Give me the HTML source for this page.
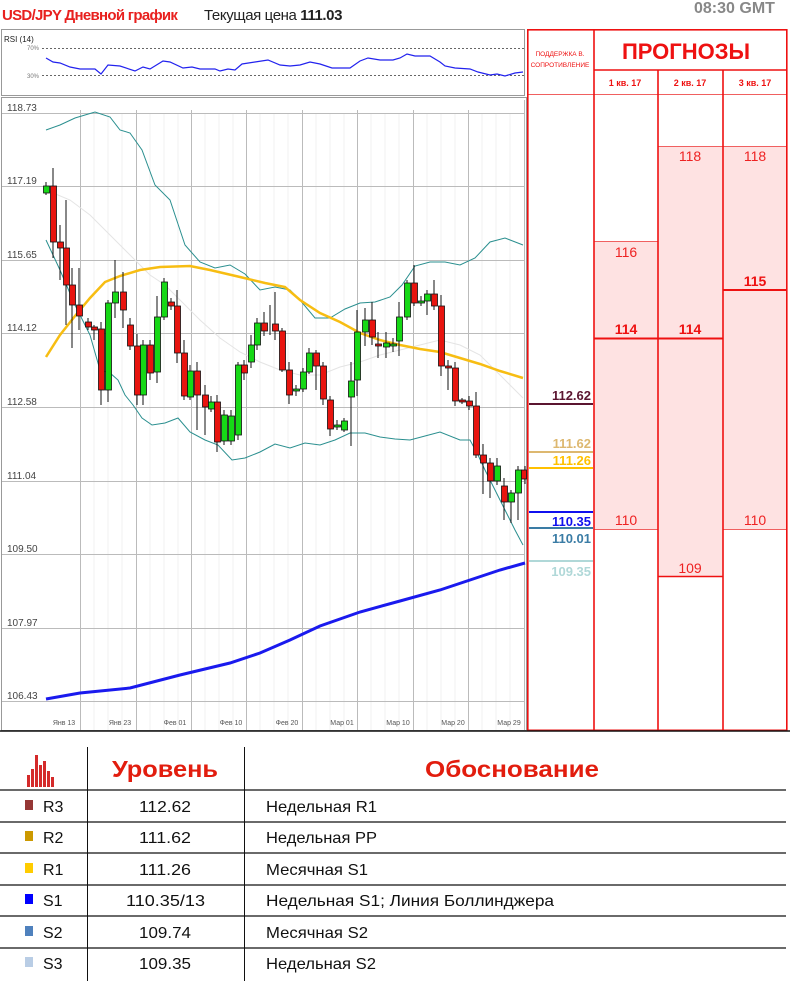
<!DOCTYPE html>
<html><head><meta charset="utf-8"><style>
body{margin:0;width:790px;height:989px;background:#fff;overflow:hidden;font-family:"Liberation Sans",sans-serif;position:relative}
.abs{position:absolute}
svg text{font-family:"Liberation Sans",sans-serif}
</style></head><body>
<div class="abs" style="left:2px;top:7px;font-size:15px;color:#e8201e;font-weight:bold;letter-spacing:-0.7px">USD/JPY Дневной график</div>
<div class="abs" style="left:204px;top:7px;font-size:15px;color:#222;letter-spacing:-0.4px">Текущая цена <b>111.03</b></div>
<div class="abs" style="left:694px;top:0px;font-size:16px;color:#888;font-weight:bold">08:30 GMT</div>

<svg class="abs" style="left:0;top:0" width="790" height="745" viewBox="0 0 790 745">
<rect x="1.5" y="29.5" width="523" height="66" fill="#fff" stroke="#999"/>
<text x="4" y="42" font-size="8" fill="#222">RSI (14)</text>
<text x="27" y="50" font-size="6" fill="#777">70%</text>
<text x="27" y="78" font-size="6" fill="#777">30%</text>
<line x1="42" y1="48.5" x2="524" y2="48.5" stroke="#666" stroke-dasharray="2,2"/>
<line x1="42" y1="75.5" x2="524" y2="75.5" stroke="#666" stroke-dasharray="2,2"/>
<polyline fill="none" stroke="#2222ee" stroke-width="1.2" points="46,58 53,62 60,63 70,67 80,69 95,69 101,74 108,65 120,66 135,71 143,67 150,69 163,61 170,62 183,68 192,67 200,69 215,69 220,71 228,69 235,70 242,64 255,62 268,60 280,65 290,66 300,65 310,62 320,64 332,68 340,68 350,68 360,61 368,58 380,60 393,60 400,58 407,54 415,56 430,56 440,62 445,66 455,68 470,69 478,72 490,75 497,74 505,76 515,73 523,72"/>

<rect x="1.5" y="97.5" width="525" height="633" fill="#fff" stroke="#999"/>
<g stroke="#f0f0f0" stroke-width="1">
<line x1="94" y1="113" x2="94" y2="730"/><line x1="108" y1="113" x2="108" y2="730"/><line x1="122" y1="113" x2="122" y2="730"/>
<line x1="150" y1="113" x2="150" y2="730"/><line x1="164" y1="113" x2="164" y2="730"/><line x1="178" y1="113" x2="178" y2="730"/>
<line x1="205" y1="113" x2="205" y2="730"/><line x1="219" y1="113" x2="219" y2="730"/><line x1="233" y1="113" x2="233" y2="730"/>
<line x1="260" y1="113" x2="260" y2="730"/><line x1="274" y1="113" x2="274" y2="730"/><line x1="288" y1="113" x2="288" y2="730"/>
<line x1="316" y1="113" x2="316" y2="730"/><line x1="330" y1="113" x2="330" y2="730"/><line x1="344" y1="113" x2="344" y2="730"/>
<line x1="371" y1="113" x2="371" y2="730"/><line x1="385" y1="113" x2="385" y2="730"/><line x1="399" y1="113" x2="399" y2="730"/>
<line x1="427" y1="113" x2="427" y2="730"/><line x1="441" y1="113" x2="441" y2="730"/><line x1="455" y1="113" x2="455" y2="730"/>
<line x1="482" y1="113" x2="482" y2="730"/><line x1="496" y1="113" x2="496" y2="730"/><line x1="510" y1="113" x2="510" y2="730"/>
</g>
<g stroke="#bbb" stroke-width="1">
<line x1="2" y1="113.5" x2="525" y2="113.5"/><line x1="2" y1="186.5" x2="525" y2="186.5"/><line x1="2" y1="260.5" x2="525" y2="260.5"/>
<line x1="2" y1="333.5" x2="525" y2="333.5"/><line x1="2" y1="407.5" x2="525" y2="407.5"/><line x1="2" y1="481.5" x2="525" y2="481.5"/>
<line x1="2" y1="554.5" x2="525" y2="554.5"/><line x1="2" y1="628.5" x2="525" y2="628.5"/><line x1="2" y1="701.5" x2="525" y2="701.5"/>
<line x1="80.5" y1="110" x2="80.5" y2="730"/><line x1="136.5" y1="110" x2="136.5" y2="730"/><line x1="191.5" y1="110" x2="191.5" y2="730"/>
<line x1="246.5" y1="110" x2="246.5" y2="730"/><line x1="302.5" y1="110" x2="302.5" y2="730"/><line x1="357.5" y1="110" x2="357.5" y2="730"/>
<line x1="413.5" y1="110" x2="413.5" y2="730"/><line x1="468.5" y1="110" x2="468.5" y2="730"/><line x1="524.5" y1="100" x2="524.5" y2="730"/>
</g>
<g font-size="10" fill="#444">
<text x="7" y="111">118.73</text><text x="7" y="184">117.19</text><text x="7" y="258">115.65</text><text x="7" y="331">114.12</text>
<text x="7" y="405">112.58</text><text x="7" y="479">111.04</text><text x="7" y="552">109.50</text><text x="7" y="626">107.97</text><text x="7" y="699">106.43</text>
</g>
<g font-size="7" fill="#555" text-anchor="middle">
<text x="64" y="725">Янв 13</text><text x="120" y="725">Янв 23</text><text x="175" y="725">Фев 01</text><text x="231" y="725">Фев 10</text><text x="287" y="725">Фев 20</text>
<text x="342" y="725">Мар 01</text><text x="398" y="725">Мар 10</text><text x="453" y="725">Мар 20</text><text x="509" y="725">Мар 29</text>
</g>

<polyline fill="none" stroke="#e4e4e4" stroke-width="1" points="46,190 70,200 90,215 110,235 130,255 150,275 165,285 180,300 200,320 220,338 240,352 260,362 280,370 300,375 320,375 340,367 360,362 380,355 400,350 420,345 440,340 460,345 480,355 500,375 523,398"/>
<polyline fill="none" stroke="#2a8f8f" stroke-width="1" points="46,130 60,125 75,118 95,112 110,117 120,130 130,133 142,150 155,185 170,200 185,245 200,262 215,268 230,265 245,274 260,290 275,287 290,290 300,300 315,318 330,318 345,309 360,303 375,302 390,297 402,285 415,266 430,262 445,262 460,265 475,258 490,242 505,238 523,245"/>
<polyline fill="none" stroke="#2a8f8f" stroke-width="1" points="46,240 60,270 75,305 90,335 100,370 110,373 118,380 125,395 133,405 142,418 152,425 165,423 178,418 190,432 205,440 218,445 232,460 245,458 260,452 275,444 290,448 305,443 320,445 335,440 350,433 365,433 380,437 395,439 410,440 425,436 440,432 460,440 470,440 478,455 485,470 495,490 505,510 515,530 523,545"/>
<polyline fill="none" stroke="#f7bd12" stroke-width="2.5" points="46,357 60,335 75,316 90,298 105,282 120,276 140,270 160,267 190,266 210,270 240,277 265,283 285,287 300,300 320,313 340,322 360,333 380,340 400,345 420,349 440,352 460,358 480,364 500,371 523,378"/>
<polyline fill="none" stroke="#1a1aee" stroke-width="3" points="46,699 80,693 130,688 180,675 230,663 260,653 290,640 320,626 360,612 400,601 440,590 470,580 500,570 525,563"/>

<g stroke="#111" stroke-width="1">
<line x1="46" y1="182" x2="46" y2="195"/><line x1="53" y1="168" x2="53" y2="258"/><line x1="60" y1="225" x2="60" y2="280"/><line x1="66" y1="200" x2="66" y2="325"/>
<line x1="72" y1="268" x2="72" y2="348"/><line x1="79" y1="268" x2="79" y2="330"/><line x1="88" y1="318" x2="88" y2="330"/><line x1="94" y1="325" x2="94" y2="340"/>
<line x1="101" y1="322" x2="101" y2="405"/><line x1="108" y1="300" x2="108" y2="402"/><line x1="115" y1="260" x2="115" y2="318"/><line x1="123" y1="272" x2="123" y2="328"/>
<line x1="130" y1="318" x2="130" y2="350"/><line x1="137" y1="334" x2="137" y2="405"/><line x1="143" y1="340" x2="143" y2="405"/><line x1="150" y1="340" x2="150" y2="380"/>
<line x1="157" y1="296" x2="157" y2="383"/><line x1="164" y1="278" x2="164" y2="320"/><line x1="171" y1="298" x2="171" y2="310"/><line x1="177" y1="290" x2="177" y2="363"/>
<line x1="184" y1="340" x2="184" y2="400"/><line x1="190" y1="365" x2="190" y2="400"/><line x1="197" y1="362" x2="197" y2="430"/><line x1="205" y1="385" x2="205" y2="435"/>
<line x1="211" y1="396" x2="211" y2="412"/><line x1="217" y1="395" x2="217" y2="452"/><line x1="224" y1="410" x2="224" y2="445"/><line x1="231" y1="410" x2="231" y2="445"/>
<line x1="238" y1="362" x2="238" y2="440"/><line x1="244" y1="360" x2="244" y2="380"/><line x1="251" y1="335" x2="251" y2="368"/><line x1="257" y1="318" x2="257" y2="350"/>
<line x1="264" y1="312" x2="264" y2="336"/><line x1="270" y1="305" x2="270" y2="335"/><line x1="275" y1="292" x2="275" y2="340"/><line x1="282" y1="328" x2="282" y2="372"/>
<line x1="289" y1="362" x2="289" y2="404"/><line x1="296" y1="385" x2="296" y2="396"/><line x1="303" y1="368" x2="303" y2="392"/><line x1="309" y1="348" x2="309" y2="374"/>
<line x1="316" y1="350" x2="316" y2="390"/><line x1="323" y1="362" x2="323" y2="405"/><line x1="330" y1="396" x2="330" y2="436"/><line x1="337" y1="420" x2="337" y2="430"/>
<line x1="344" y1="418" x2="344" y2="432"/><line x1="351" y1="362" x2="351" y2="446"/><line x1="357" y1="310" x2="357" y2="396"/><line x1="365" y1="308" x2="365" y2="346"/>
<line x1="372" y1="302" x2="372" y2="345"/><line x1="378" y1="332" x2="378" y2="358"/><line x1="386" y1="332" x2="386" y2="358"/><line x1="393" y1="338" x2="393" y2="352"/>
<line x1="399" y1="302" x2="399" y2="356"/><line x1="407" y1="280" x2="407" y2="320"/><line x1="414" y1="265" x2="414" y2="306"/><line x1="421" y1="296" x2="421" y2="306"/>
<line x1="427" y1="290" x2="427" y2="315"/><line x1="434" y1="280" x2="434" y2="310"/><line x1="441" y1="295" x2="441" y2="376"/><line x1="448" y1="360" x2="448" y2="390"/>
<line x1="455" y1="362" x2="455" y2="406"/><line x1="462" y1="398" x2="462" y2="404"/><line x1="469" y1="396" x2="469" y2="410"/><line x1="476" y1="392" x2="476" y2="458"/>
<line x1="483" y1="444" x2="483" y2="494"/><line x1="490" y1="458" x2="490" y2="498"/><line x1="497" y1="458" x2="497" y2="485"/><line x1="504" y1="478" x2="504" y2="520"/>
<line x1="511" y1="490" x2="511" y2="523"/><line x1="518" y1="466" x2="518" y2="520"/><line x1="525" y1="466" x2="525" y2="484"/>
</g>
<g stroke="#111" stroke-width="0.8">
<rect x="43.5" y="186" width="6" height="7" fill="#16d816"/>
<rect x="50.5" y="186" width="6" height="56" fill="#e8140f"/>
<rect x="57.5" y="242" width="6" height="6" fill="#e8140f"/>
<rect x="63.5" y="248" width="6" height="37" fill="#e8140f"/>
<rect x="69.5" y="285" width="6" height="20" fill="#e8140f"/>
<rect x="76.5" y="305" width="6" height="11" fill="#e8140f"/>
<rect x="85.5" y="322" width="6" height="5" fill="#e8140f"/>
<rect x="91.5" y="327" width="6" height="3" fill="#e8140f"/>
<rect x="98.5" y="329" width="6" height="61" fill="#e8140f"/>
<rect x="105.5" y="303" width="6" height="87" fill="#16d816"/>
<rect x="112.5" y="292" width="6" height="11" fill="#16d816"/>
<rect x="120.5" y="292" width="6" height="18" fill="#e8140f"/>
<rect x="127.5" y="325" width="6" height="21" fill="#e8140f"/>
<rect x="134.5" y="346" width="6" height="49" fill="#e8140f"/>
<rect x="140.5" y="345" width="6" height="50" fill="#16d816"/>
<rect x="147.5" y="345" width="6" height="28" fill="#e8140f"/>
<rect x="154.5" y="317" width="6" height="55" fill="#16d816"/>
<rect x="161.5" y="282" width="6" height="35" fill="#16d816"/>
<rect x="168.5" y="302" width="6" height="4" fill="#e8140f"/>
<rect x="174.5" y="306" width="6" height="47" fill="#e8140f"/>
<rect x="181.5" y="353" width="6" height="43" fill="#e8140f"/>
<rect x="187.5" y="371" width="6" height="26" fill="#16d816"/>
<rect x="194.5" y="371" width="6" height="24" fill="#e8140f"/>
<rect x="202.5" y="395" width="6" height="12" fill="#e8140f"/>
<rect x="208.5" y="402" width="6" height="7" fill="#16d816"/>
<rect x="214.5" y="402" width="6" height="40" fill="#e8140f"/>
<rect x="221.5" y="415" width="6" height="26" fill="#16d816"/>
<rect x="228.5" y="416" width="6" height="25" fill="#16d816"/>
<rect x="235.5" y="365" width="6" height="70" fill="#16d816"/>
<rect x="241.5" y="365" width="6" height="8" fill="#e8140f"/>
<rect x="248.5" y="345" width="6" height="17" fill="#16d816"/>
<rect x="254.5" y="323" width="6" height="22" fill="#16d816"/>
<rect x="261.5" y="323" width="6" height="8" fill="#e8140f"/>
<rect x="272.5" y="324" width="6" height="7" fill="#e8140f"/>
<rect x="279.5" y="331" width="6" height="39" fill="#e8140f"/>
<rect x="286.5" y="370" width="6" height="25" fill="#e8140f"/>
<rect x="293.5" y="389" width="6" height="2" fill="#16d816"/>
<rect x="300.5" y="372" width="6" height="17" fill="#16d816"/>
<rect x="306.5" y="353" width="6" height="19" fill="#16d816"/>
<rect x="313.5" y="353" width="6" height="13" fill="#e8140f"/>
<rect x="320.5" y="366" width="6" height="33" fill="#e8140f"/>
<rect x="327.5" y="400" width="6" height="29" fill="#e8140f"/>
<rect x="334.5" y="425" width="6" height="2" fill="#16d816"/>
<rect x="341.5" y="421" width="6" height="9" fill="#16d816"/>
<rect x="348.5" y="381" width="6" height="16" fill="#16d816"/>
<rect x="354.5" y="332" width="6" height="48" fill="#16d816"/>
<rect x="362.5" y="320" width="6" height="12" fill="#16d816"/>
<rect x="369.5" y="320" width="6" height="17" fill="#e8140f"/>
<rect x="375.5" y="344" width="6" height="2" fill="#e8140f"/>
<rect x="383.5" y="343" width="6" height="4" fill="#16d816"/>
<rect x="390.5" y="344" width="6" height="2" fill="#16d816"/>
<rect x="396.5" y="317" width="6" height="24" fill="#16d816"/>
<rect x="404.5" y="283" width="6" height="34" fill="#16d816"/>
<rect x="411.5" y="283" width="6" height="20" fill="#e8140f"/>
<rect x="418.5" y="301" width="6" height="2" fill="#16d816"/>
<rect x="424.5" y="294" width="6" height="7" fill="#16d816"/>
<rect x="431.5" y="294" width="6" height="12" fill="#e8140f"/>
<rect x="438.5" y="306" width="6" height="60" fill="#e8140f"/>
<rect x="445.5" y="366" width="6" height="2" fill="#e8140f"/>
<rect x="452.5" y="368" width="6" height="33" fill="#e8140f"/>
<rect x="459.5" y="400" width="6" height="2" fill="#e8140f"/>
<rect x="466.5" y="401" width="6" height="5" fill="#e8140f"/>
<rect x="473.5" y="406" width="6" height="49" fill="#e8140f"/>
<rect x="480.5" y="455" width="6" height="8" fill="#e8140f"/>
<rect x="487.5" y="463" width="6" height="18" fill="#e8140f"/>
<rect x="494.5" y="466" width="6" height="15" fill="#16d816"/>
<rect x="501.5" y="486" width="6" height="16" fill="#e8140f"/>
<rect x="508.5" y="493" width="6" height="9" fill="#16d816"/>
<rect x="515.5" y="470" width="6" height="23" fill="#16d816"/>
<rect x="521.5" y="470" width="5" height="9" fill="#e8140f"/>
</g>

<rect x="594" y="241" width="64" height="288" fill="#fee2e2"/>
<rect x="658" y="146" width="65" height="430" fill="#fee2e2"/>
<rect x="723" y="146" width="64" height="383" fill="#fee2e2"/>
<g stroke="#f06060" stroke-width="1">
<line x1="594" y1="241.5" x2="658" y2="241.5"/><line x1="658" y1="146.5" x2="787" y2="146.5"/>
<line x1="594" y1="529.5" x2="658" y2="529.5"/><line x1="723" y1="529.5" x2="787" y2="529.5"/>
<line x1="527" y1="94.5" x2="787" y2="94.5"/>
</g>
<line x1="658" y1="576.5" x2="723" y2="576.5" stroke="#ee1111" stroke-width="1.5"/>
<line x1="594" y1="338.5" x2="723" y2="338.5" stroke="#ee1111" stroke-width="2"/>
<line x1="723" y1="290" x2="787" y2="290" stroke="#ee1111" stroke-width="2"/>
<g stroke="#ee1111" stroke-width="1.6" fill="none">
<rect x="527.8" y="29.8" width="259" height="700.5"/>
<line x1="594" y1="29" x2="594" y2="731"/><line x1="658" y1="70" x2="658" y2="731"/><line x1="723" y1="70" x2="723" y2="731"/>
<line x1="594" y1="70" x2="787" y2="70"/>
</g>
<text x="560" y="56" font-size="6.5" fill="#ee1111" text-anchor="middle">ПОДДЕРЖКА В.</text>
<text x="560" y="67" font-size="6.5" fill="#ee1111" text-anchor="middle">СОПРОТИВЛЕНИЕ</text>
<text x="686" y="59" font-size="22" font-weight="bold" fill="#ee1111" text-anchor="middle">ПРОГНОЗЫ</text>
<g font-size="9" font-weight="bold" fill="#ee1111" text-anchor="middle">
<text x="625" y="86">1 кв. 17</text><text x="690" y="86">2 кв. 17</text><text x="755" y="86">3 кв. 17</text>
</g>
<g font-size="14" fill="#ee2222" text-anchor="middle">
<text x="626" y="257">116</text><text x="690" y="161">118</text><text x="755" y="161">118</text>
<text x="626" y="525">110</text><text x="755" y="525">110</text><text x="690" y="573">109</text>
</g>
<g font-size="14" font-weight="bold" fill="#ee1111" text-anchor="middle">
<text x="626" y="334">114</text><text x="690" y="334">114</text><text x="755" y="286">115</text>
</g>
<line x1="529" y1="404" x2="593" y2="404" stroke="#5b1530" stroke-width="2"/>
<line x1="529" y1="452" x2="593" y2="452" stroke="#ddb870" stroke-width="2"/>
<line x1="529" y1="468" x2="593" y2="468" stroke="#ffc000" stroke-width="2"/>
<line x1="529" y1="512" x2="593" y2="512" stroke="#1010ee" stroke-width="2"/>
<line x1="529" y1="528" x2="593" y2="528" stroke="#3a7ca5" stroke-width="2"/>
<line x1="529" y1="561" x2="593" y2="561" stroke="#b0d8d8" stroke-width="2"/>
<g font-size="13" font-weight="bold" text-anchor="end">
<text x="591" y="400" fill="#5b1530">112.62</text>
<text x="591" y="448" fill="#ddb870">111.62</text>
<text x="591" y="465" fill="#ffc000">111.26</text>
<text x="591" y="526" fill="#1010ee">110.35</text>
<text x="591" y="543" fill="#3a7ca5">110.01</text>
<text x="591" y="576" fill="#b0d8d8">109.35</text>
</g>
<line x1="0" y1="731" x2="790" y2="731" stroke="#111" stroke-width="1.5"/>
</svg>

<svg class="abs" style="left:0;top:745px" width="790" height="244">
<g fill="#d42a2a">
<rect x="27" y="30" width="3" height="12"/><rect x="31" y="24" width="3" height="18"/><rect x="35" y="10" width="3" height="32"/><rect x="39" y="20" width="3" height="22"/><rect x="43" y="16" width="3" height="26"/><rect x="47" y="26" width="3" height="16"/><rect x="51" y="32" width="3" height="10"/>
</g>
<line x1="87.5" y1="2" x2="87.5" y2="236" stroke="#111"/>
<line x1="244.5" y1="2" x2="244.5" y2="236" stroke="#111"/>
<g stroke="#111" stroke-width="1.2">
<line x1="0" y1="45" x2="786" y2="45"/><line x1="0" y1="77" x2="786" y2="77"/><line x1="0" y1="108" x2="786" y2="108"/>
<line x1="0" y1="140" x2="786" y2="140"/><line x1="0" y1="171" x2="786" y2="171"/><line x1="0" y1="203" x2="786" y2="203"/>
</g>
<text x="112" y="32" font-size="23" font-weight="bold" fill="#e21d0e" textLength="106" lengthAdjust="spacingAndGlyphs">Уровень</text>
<text x="425" y="32" font-size="23" font-weight="bold" fill="#e21d0e" textLength="174" lengthAdjust="spacingAndGlyphs">Обоснование</text>
<rect x="25" y="55" width="8" height="10" fill="#953735"/>
<rect x="25" y="86" width="8" height="10" fill="#cc9900"/>
<rect x="25" y="118" width="8" height="10" fill="#ffcc00"/>
<rect x="25" y="149" width="8" height="10" fill="#0000ff"/>
<rect x="25" y="181" width="8" height="10" fill="#4f81bd"/>
<rect x="25" y="212" width="8" height="10" fill="#b9cde5"/>
<g font-size="16" fill="#111">
<text x="43" y="67">R3</text><text x="43" y="98">R2</text><text x="43" y="130">R1</text><text x="43" y="161">S1</text><text x="43" y="193">S2</text><text x="43" y="224">S3</text>
</g>
<g font-size="16" fill="#111">
<text x="139" y="67" textLength="52" lengthAdjust="spacingAndGlyphs">112.62</text>
<text x="139" y="98" textLength="52" lengthAdjust="spacingAndGlyphs">111.62</text>
<text x="139" y="130" textLength="52" lengthAdjust="spacingAndGlyphs">111.26</text>
<text x="126" y="161" textLength="79" lengthAdjust="spacingAndGlyphs">110.35/13</text>
<text x="139" y="193" textLength="52" lengthAdjust="spacingAndGlyphs">109.74</text>
<text x="139" y="224" textLength="52" lengthAdjust="spacingAndGlyphs">109.35</text>
</g>
<g font-size="16" fill="#111">
<text x="266" y="67" textLength="111" lengthAdjust="spacingAndGlyphs">Недельная R1</text>
<text x="266" y="98" textLength="111" lengthAdjust="spacingAndGlyphs">Недельная PP</text>
<text x="266" y="130" textLength="102" lengthAdjust="spacingAndGlyphs">Месячная S1</text>
<text x="266" y="161" textLength="288" lengthAdjust="spacingAndGlyphs">Недельная S1; Линия Боллинджера</text>
<text x="266" y="193" textLength="102" lengthAdjust="spacingAndGlyphs">Месячная S2</text>
<text x="266" y="224" textLength="110" lengthAdjust="spacingAndGlyphs">Недельная S2</text>
</g>
</svg>
</body></html>
